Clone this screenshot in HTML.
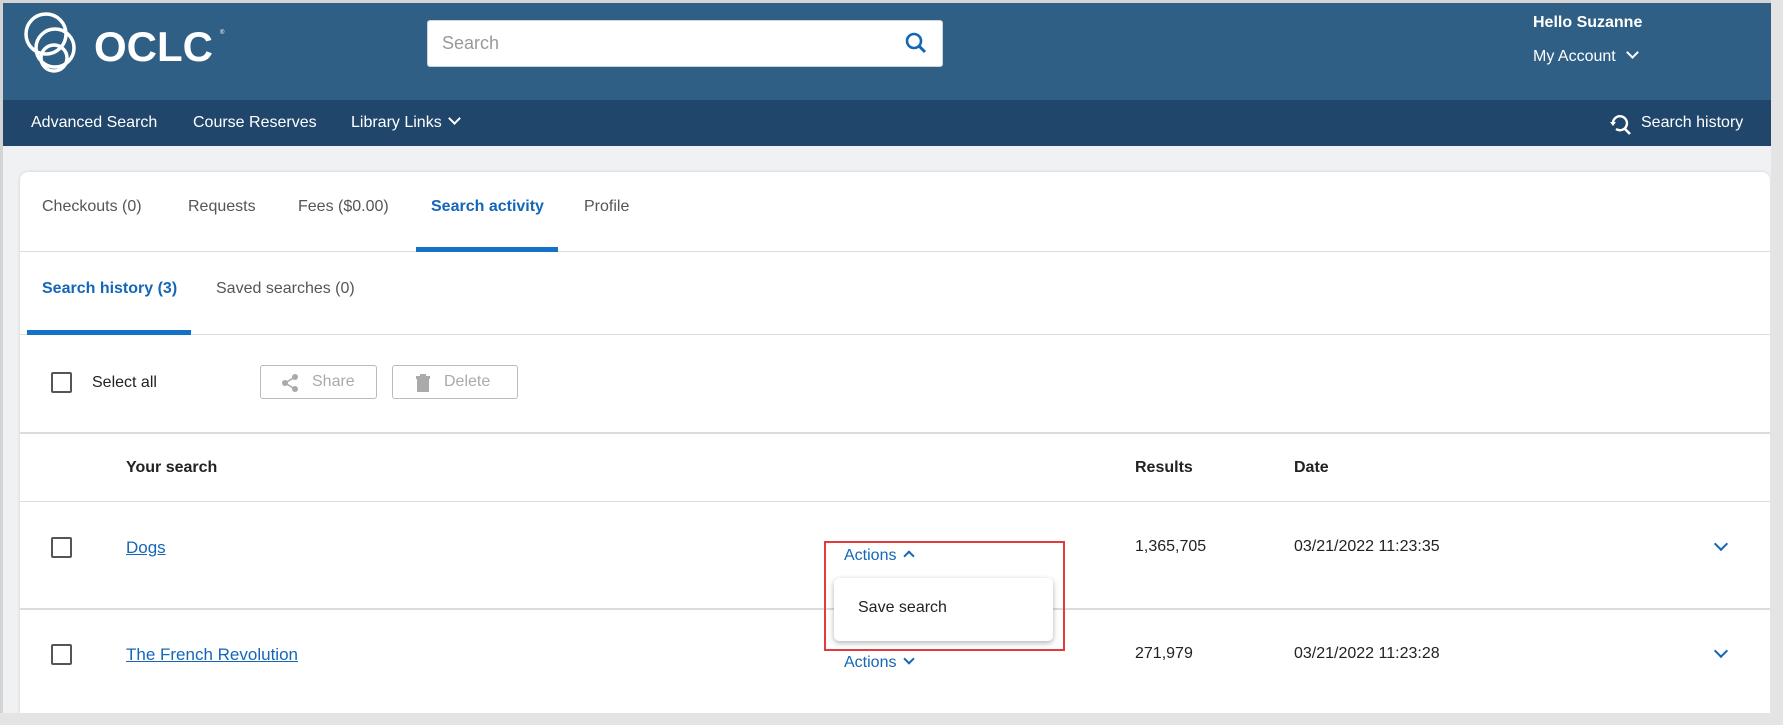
<!DOCTYPE html>
<html style="width:1783px;height:725px;overflow:hidden"><head><meta charset="utf-8"><style>
*{box-sizing:border-box;margin:0;padding:0}
body{width:1783px;height:725px;overflow:hidden;background:#f0f1f3;font-family:"Liberation Sans",sans-serif;position:relative}
.a{position:absolute;white-space:nowrap}
.hdr{position:absolute;left:0;top:0;width:1783px;height:100px;background:#2f5f85}
.nav{position:absolute;left:0;top:100px;width:1783px;height:46px;background:#20466b}
.w{color:#fff;font-size:16px}
.card{position:absolute;left:20px;top:172px;width:1750px;height:541px;background:#fff;border-radius:8px 8px 0 0;box-shadow:0 0 3px rgba(0,0,0,.15)}
.hr{position:absolute;left:20px;width:1750px;height:1px;background:#dcdcdc}
.t{font-size:16px;color:#555}
.d{font-size:16px;color:#222}
.bl{color:#1566b7}
.cb{position:absolute;width:21px;height:21px;border:2px solid #555;border-radius:2px}
.btn{position:absolute;height:34px;border:1px solid #bbb;border-radius:3px;color:#aaa;font-size:16px;line-height:32px}
</style></head><body>
<div class="hdr"></div>
<div class="nav"></div>
<div class="a" style="left:0;top:0;width:1783px;height:3px;background:#d4d4d4"></div>
<div class="a" style="left:0;top:0;width:3px;height:725px;background:#d4d4d4"></div>
<svg class="a" style="left:18px;top:10px" width="215" height="68" viewBox="0 0 215 68">
<g fill="none" stroke="#fff" stroke-width="3.5">
<circle cx="28" cy="24" r="20"/><circle cx="37" cy="38" r="19"/><circle cx="36" cy="48" r="13"/></g>
<text x="76" y="51" fill="#fff" font-family="Liberation Sans" font-weight="bold" font-size="42">OCLC</text>
<text x="202" y="24" fill="#fff" font-size="6">®</text></svg>
<div class="a" style="left:427px;top:20px;width:516px;height:47px;background:#fff;border:1px solid #c8d4de;border-radius:3px"></div>
<div class="a" style="left:442px;top:33px;font-size:18px;color:#999">Search</div>
<svg class="a" style="left:904px;top:31px" width="24" height="24" viewBox="0 0 24 24"><circle cx="10" cy="10" r="7" fill="none" stroke="#1566b7" stroke-width="2.6"/><path d="M15 15l6 6" stroke="#1566b7" stroke-width="3"/></svg>
<div class="a w" style="left:1533px;top:14px;font-weight:bold">Hello Suzanne</div>
<div class="a w" style="left:1533px;top:48px">My Account <span style="display:inline-block;width:9px;height:9px;border-right:2.5px solid #fff;border-bottom:2.5px solid #fff;transform:rotate(45deg);margin:0 0 4px 8px"></span></div>
<div class="a w" style="left:31px;top:114px">Advanced Search</div>
<div class="a w" style="left:193px;top:114px">Course Reserves</div>
<div class="a w" style="left:351px;top:114px">Library Links <span style="display:inline-block;width:9px;height:9px;border-right:2.5px solid #fff;border-bottom:2.5px solid #fff;transform:rotate(45deg);margin:0 0 4px 4px"></span></div>
<svg class="a" style="left:1609px;top:112px" width="24" height="24" viewBox="0 0 24 24"><path d="M4 12a7 7 0 1 1 3 5" fill="none" stroke="#fff" stroke-width="2.4"/><path d="M1 10l3 4 3-4z" fill="#fff"/><path d="M15 16l6 6" stroke="#fff" stroke-width="2.6"/></svg>
<div class="a w" style="left:1641px;top:114px">Search history</div>
<div class="card"></div>
<div class="a t" style="left:42px;top:198px">Checkouts (0)</div>
<div class="a t" style="left:188px;top:198px">Requests</div>
<div class="a t" style="left:298px;top:198px">Fees ($0.00)</div>
<div class="a t bl" style="left:431px;top:198px;font-weight:bold">Search activity</div>
<div class="a t" style="left:584px;top:198px">Profile</div>
<div class="hr" style="top:251px"></div>
<div class="a" style="left:416px;top:247px;width:142px;height:5px;background:#1471c6"></div>
<div class="a t bl" style="left:42px;top:280px;font-weight:bold">Search history (3)</div>
<div class="a t" style="left:216px;top:280px">Saved searches (0)</div>
<div class="hr" style="top:334px"></div>
<div class="a" style="left:27px;top:330px;width:164px;height:5px;background:#1471c6"></div>
<div class="cb" style="left:51px;top:372px"></div>
<div class="a d" style="left:92px;top:374px">Select all</div>
<div class="btn" style="left:260px;top:365px;width:117px"><svg style="position:absolute;left:20px;top:8px" width="18" height="18" viewBox="0 0 18 18"><g fill="#aaa"><circle cx="14" cy="3" r="3"/><circle cx="4" cy="9" r="3"/><circle cx="14" cy="15" r="3"/></g><path d="M14 3L4 9l10 6" stroke="#aaa" stroke-width="1.6" fill="none"/></svg><span style="position:absolute;left:51px">Share</span></div>
<div class="btn" style="left:392px;top:365px;width:126px"><svg style="position:absolute;left:22px;top:8px" width="16" height="18" viewBox="0 0 16 18"><rect x="1" y="2" width="14" height="3" fill="#aaa"/><rect x="5" y="0" width="6" height="3" fill="#aaa"/><rect x="2" y="5" width="12" height="13" fill="#aaa"/></svg><span style="position:absolute;left:51px">Delete</span></div>
<div class="hr" style="top:432px;height:2px"></div>
<div class="a d" style="left:126px;top:459px;font-weight:bold">Your search</div>
<div class="a d" style="left:1135px;top:459px;font-weight:bold">Results</div>
<div class="a d" style="left:1294px;top:459px;font-weight:bold">Date</div>
<div class="hr" style="top:501px"></div>
<div class="cb" style="left:51px;top:537px"></div>
<div class="a d bl" style="left:126px;top:538px;text-decoration:underline;font-size:17px">Dogs</div>
<div class="a bl" style="left:844px;top:547px;font-size:16px">Actions <span style="display:inline-block;width:8px;height:8px;border-left:2.5px solid #1566b7;border-top:2.5px solid #1566b7;transform:rotate(45deg);margin:0 0 0 4px"></span></div>
<div class="a d" style="left:1135px;top:538px">1,365,705</div>
<div class="a d" style="left:1294px;top:538px">03/21/2022 11:23:35</div>
<div class="a" style="left:1716px;top:539px;width:10px;height:10px;border-right:2.5px solid #1566b7;border-bottom:2.5px solid #1566b7;transform:rotate(45deg)"></div>
<div class="hr" style="top:608px;height:2px"></div>
<div class="cb" style="left:51px;top:644px"></div>
<div class="a d bl" style="left:126px;top:645px;text-decoration:underline;font-size:17px">The French Revolution</div>
<div class="a bl" style="left:844px;top:654px;font-size:16px">Actions <span style="display:inline-block;width:8px;height:8px;border-right:2.5px solid #1566b7;border-bottom:2.5px solid #1566b7;transform:rotate(45deg);margin:0 0 4px 4px"></span></div>
<div class="a d" style="left:1135px;top:645px">271,979</div>
<div class="a d" style="left:1294px;top:645px">03/21/2022 11:23:28</div>
<div class="a" style="left:1716px;top:646px;width:10px;height:10px;border-right:2.5px solid #1566b7;border-bottom:2.5px solid #1566b7;transform:rotate(45deg)"></div>
<div class="a" style="left:0;top:713px;width:1783px;height:12px;background:#e4e4e4"></div>
<div class="a" style="left:1771px;top:0;width:12px;height:725px;background:#e4e4e4"></div>
<div class="a" style="left:834px;top:578px;width:219px;height:63px;background:#fff;border-radius:5px;box-shadow:0 2px 6px rgba(0,0,0,.3)"></div>
<div class="a d" style="left:858px;top:599px">Save search</div>
<div class="a" style="left:824px;top:541px;width:241px;height:110px;border:2px solid #e03c3c"></div>
</body></html>
